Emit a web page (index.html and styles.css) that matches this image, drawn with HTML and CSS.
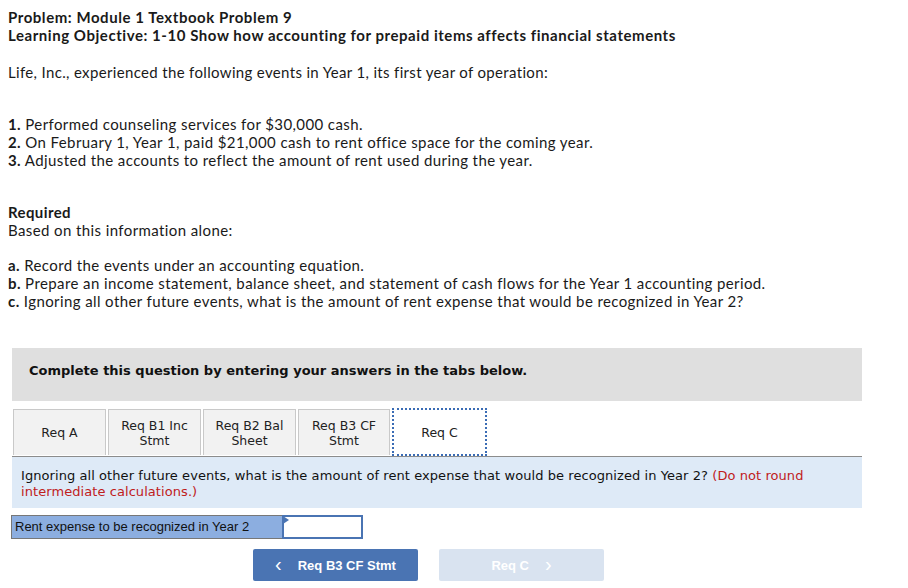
FILE: index.html
```html
<!DOCTYPE html>
<html>
<head>
<meta charset="utf-8">
<link rel="stylesheet" href="styles.css">
</head>
<body>
<div class="intro">
  <p class="title">Problem: Module 1 Textbook Problem 9<br>Learning Objective: 1-10 Show how accounting for prepaid items affects financial statements</p>
  <p class="lead">Life, Inc., experienced the following events in Year 1, its first year of operation:</p>
  <p class="events"><b>1.</b> Performed counseling services for $30,000 cash.<br><b>2.</b> On February 1, Year 1, paid $21,000 cash to rent office space for the coming year.<br><b>3.</b> Adjusted the accounts to reflect the amount of rent used during the year.</p>
  <p class="required"><b>Required</b><br>Based on this information alone:</p>
  <p class="reqs"><b>a.</b> Record the events under an accounting equation.<br><b>b.</b> Prepare an income statement, balance sheet, and statement of cash flows for the Year 1 accounting period.<br><b>c.</b> Ignoring all other future events, what is the amount of rent expense that would be recognized in Year 2?</p>
</div>
<div class="panel">
  <div class="banner">Complete this question by entering your answers in the tabs below.</div>
  <div class="tabs">
    <div class="tab">Req A</div>
    <div class="tab">Req B1 Inc<br>Stmt</div>
    <div class="tab">Req B2 Bal<br>Sheet</div>
    <div class="tab">Req B3 CF<br>Stmt</div>
    <div class="tab active">Req C</div>
  </div>
  <div class="question">Ignoring all other future events, what is the amount of rent expense that would be recognized in Year 2? <span class="note">(Do not round intermediate calculations.)</span></div>
  <div class="answer">
    <div class="label">Rent expense to be recognized in Year 2</div>
    <div class="input"><span class="flag"></span></div>
  </div>
  <div class="nav">
    <div class="btn prev"><span class="chev">&lsaquo;</span>Req B3 CF Stmt</div>
    <div class="btn next">Req C<span class="chev">&rsaquo;</span></div>
  </div>
</div>
</body>
</html>
```
FILE: styles.css
```css
body {
  margin: 0;
  background: #fff;
  color: #1a1a1a;
}
.intro {
  padding: 8px 0 0 8px;
  font-family: Lato, "Liberation Sans", sans-serif;
  font-size: 15px;
  line-height: 18px;
  letter-spacing: 0.4px;
}
.intro p { margin: 0; }
.intro b { font-weight: 700; }
.title {
  font-weight: 700;
  font-size: 15px;
  letter-spacing: 0.55px;
}
.lead { margin-top: 19px !important; letter-spacing: 0.34px; }
.events { margin-top: 34px !important; }
.required { margin-top: 34px !important; }
.reqs { margin-top: 17px !important; }

.panel {
  margin: 38px 0 0 12px;
  width: 850px;
  font-family: "DejaVu Sans", Verdana, sans-serif;
}
.banner {
  background: #dfdfdf;
  height: 53px;
  box-sizing: border-box;
  padding: 15px 0 0 17px;
  font-size: 13px;
  font-weight: 700;
  color: #111;
}
.tabs {
  display: flex;
  margin-top: 8px;
  padding-left: 1px;
}
.tab {
  width: 93px;
  height: 46px;
  margin-right: 2px;
  box-sizing: border-box;
  display: flex;
  align-items: center;
  justify-content: center;
  text-align: center;
  font-size: 12.5px;
  line-height: 15px;
  color: #222;
  background: #f2f2f2;
  border: 1px solid #c9c9c9;
  border-bottom: none;
}
.tab:nth-child(4) { width: 92px; }
.tab.active {
  width: 95px;
  height: 48px;
  margin-top: -1px;
  background: #fff;
  border: 2px dotted #3a6cb5;
}
.question {
  background: #deeaf7;
  border-top: 1px solid #8c8c8c;
  height: 52px;
  box-sizing: border-box;
  padding: 11px 9px 0 9px;
  font-size: 13px;
  line-height: 16px;
  letter-spacing: 0.07px;
  color: #111;
}
.note { color: #c0201c; }
.answer {
  display: flex;
  margin: 7px 0 0 -1px;
  width: 352px;
  height: 24px;
  border: 1px solid #777;
  box-sizing: border-box;
}
.label {
  background: #8caee0;
  width: 267px;
  font-family: "Liberation Sans", Arial, sans-serif;
  font-size: 13px;
  line-height: 22px;
  padding-left: 3px;
  color: #111;
}
.input {
  flex: 1;
  position: relative;
  background: #fff;
  border: 2px solid #4a74b3;
  margin: -1px -1px -1px 0;
}
.flag {
  position: absolute;
  left: -1px;
  top: -1px;
  width: 0;
  height: 0;
  border-top: 4px solid transparent;
  border-bottom: 4px solid transparent;
  border-left: 6px solid #4a74b3;
}
.nav {
  display: flex;
  gap: 21px;
  margin: 10px 0 0 241px;
}
.btn {
  width: 165px;
  height: 32px;
  border-radius: 2px;
  display: flex;
  align-items: center;
  justify-content: center;
  font-family: "Liberation Sans", Arial, sans-serif;
  font-weight: 700;
  font-size: 13px;
  color: #fff;
}
.prev { background: #4a74b3; }
.next { background: #d9e3f0; }
.chev {
  font-size: 20px;
  font-weight: 400;
  line-height: 1;
  margin-top: -3px;
}
.prev .chev { margin-right: 16px; }
.next .chev { margin-left: 16px; }
```
